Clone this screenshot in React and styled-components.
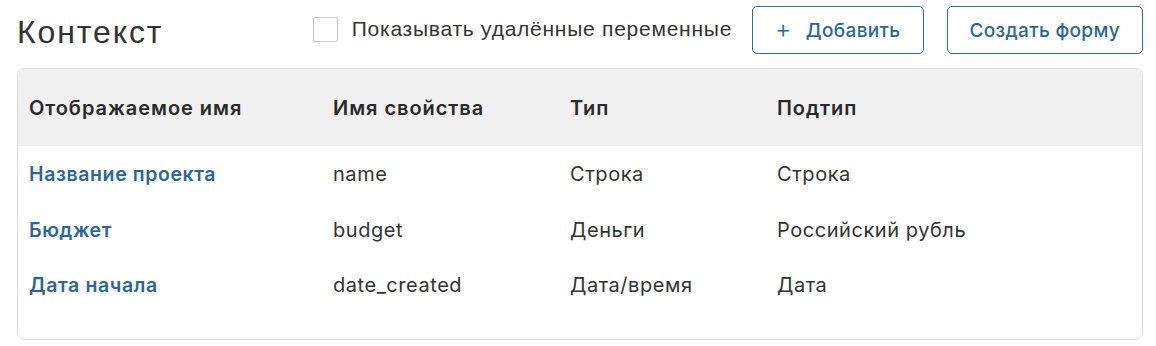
import React from "react";
import styled, { createGlobalStyle } from "styled-components";

const GlobalStyle = createGlobalStyle`
  body {
    margin: 0;
    background: #ffffff;
    font-family: Inter, "Noto Sans", sans-serif;
  }
`;

const Page = styled.div`
  width: 1156px;
  padding: 6px 13px 0 17px;
  box-sizing: border-box;
`;

const Toolbar = styled.div`
  display: flex;
  align-items: center;
  height: 48px;
`;

const Title = styled.h1`
  margin: 0;
  font-family: "Liberation Sans", Arial, sans-serif;
  font-size: 32px;
  font-weight: 400;
  letter-spacing: 1.9px;
  color: #333333;
  flex: 1;
  padding-top: 4px;
`;

const CheckLabel = styled.label`
  display: flex;
  align-items: center;
  gap: 14px;
  font-family: "Liberation Sans", Arial, sans-serif;
  font-size: 21px;
  letter-spacing: 0.75px;
  color: #333333;
  margin-right: 20px;
  padding-bottom: 2px;
`;

const Box = styled.span`
  width: 25px;
  height: 25px;
  border: 1px solid #c8c8c8;
  border-radius: 2px;
  box-sizing: border-box;
  background: #fff;
`;

const Button = styled.button`
  height: 48px;
  padding: 0 ${(p) => p.$pad || 22}px;
  margin-left: ${(p) => p.$gap || 0}px;
  border: 1.5px solid #2f6ea3;
  border-radius: 5px;
  background: #ffffff;
  color: #2b669a;
  font-family: Inter, "Noto Sans", sans-serif;
  font-size: 19px;
  font-weight: 500;
  letter-spacing: 0.35px;
  display: flex;
  align-items: center;
  gap: 14px;
  cursor: pointer;
`;

const Plus = styled.span`
  font-size: 25px;
  font-weight: 300;
  line-height: 1;
  margin-top: -2px;
`;

const Card = styled.div`
  margin-top: 14px;
  height: 272px;
  border: 1px solid #dcdcdc;
  border-radius: 7px;
  overflow: hidden;
  box-sizing: border-box;
`;

const Grid = styled.div`
  display: grid;
  grid-template-columns: 304px 237px 207px 1fr;
  padding-left: 11px;
`;

const Head = styled(Grid)`
  background: #f0f0f0;
  height: 77px;
  align-items: center;
`;

const HeadCell = styled.div`
  font-size: 20px;
  font-weight: 600;
  letter-spacing: 0.95px;
  color: #2a2a2a;
`;

const Body = styled.div`
  padding-top: 0;
`;

const Row = styled(Grid)`
  height: 55.5px;
  align-items: center;
  &:first-child {
    height: 56px;
  }
`;

const Cell = styled.div`
  font-size: 20px;
  letter-spacing: 0.55px;
  color: #333333;
  font-weight: 400;
`;

const NameCell = styled(Cell)`
  color: #2b669a;
  font-weight: 600;
  font-size: 19.5px;
  letter-spacing: 0.6px;
`;

const rows = [
  { title: "Название проекта", prop: "name", type: "Строка", sub: "Строка" },
  { title: "Бюджет", prop: "budget", type: "Деньги", sub: "Российский рубль" },
  { title: "Дата начала", prop: "date_created", type: "Дата/время", sub: "Дата" },
];

export default function App() {
  return (
    <Page>
      <GlobalStyle />
      <Toolbar>
        <Title>Контекст</Title>
        <CheckLabel>
          <Box />
          Показывать удалённые переменные
        </CheckLabel>
        <Button $pad={22}>
          <Plus>+</Plus>
          Добавить
        </Button>
        <Button $gap={23} $pad={22}>Создать форму</Button>
      </Toolbar>
      <Card>
        <Head>
          <HeadCell>Отображаемое имя</HeadCell>
          <HeadCell>Имя свойства</HeadCell>
          <HeadCell>Тип</HeadCell>
          <HeadCell>Подтип</HeadCell>
        </Head>
        <Body>
          {rows.map((r) => (
            <Row key={r.prop}>
              <NameCell>{r.title}</NameCell>
              <Cell>{r.prop}</Cell>
              <Cell>{r.type}</Cell>
              <Cell>{r.sub}</Cell>
            </Row>
          ))}
        </Body>
      </Card>
    </Page>
  );
}
